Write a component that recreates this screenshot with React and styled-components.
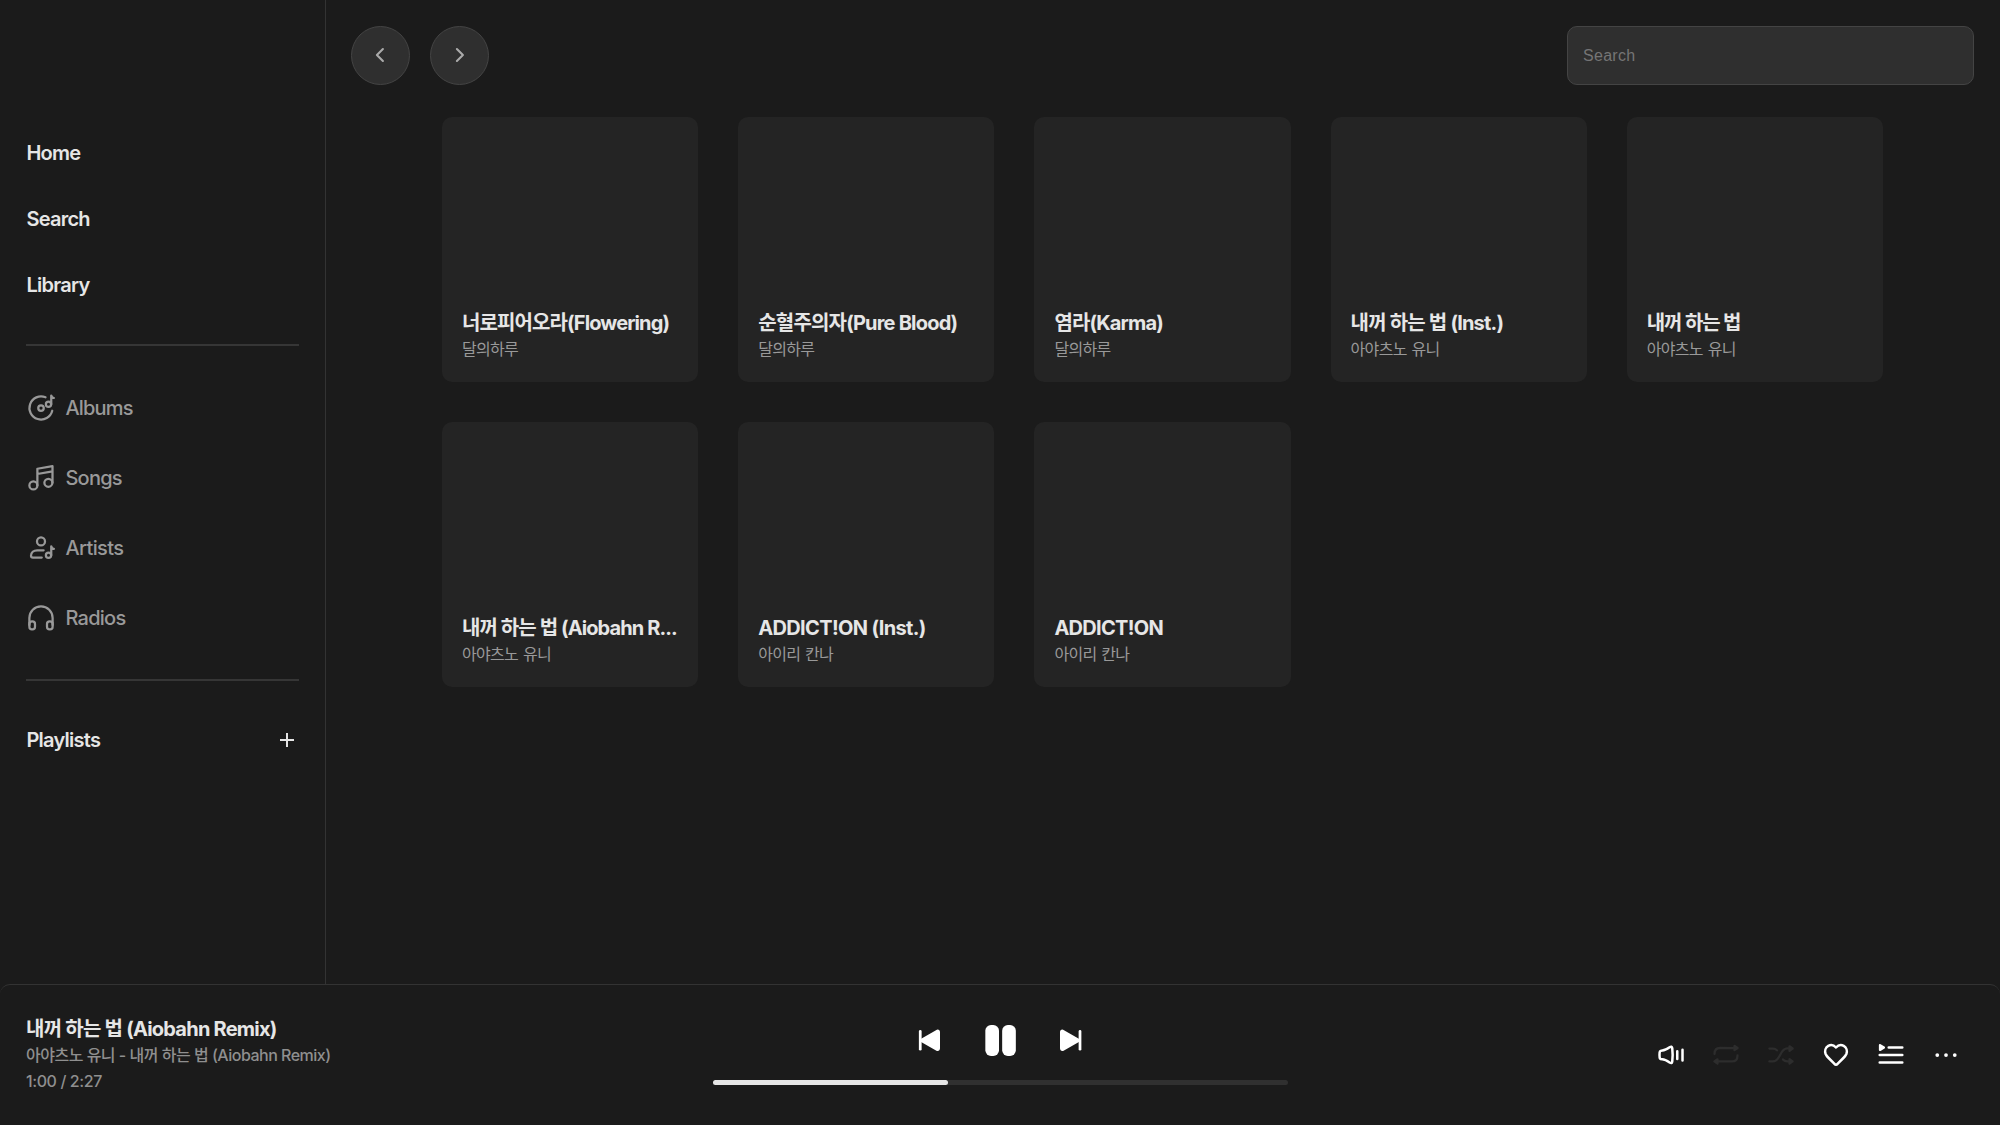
import React from "react";
import styled, { createGlobalStyle } from "styled-components";

const GlobalStyle = createGlobalStyle`
  *, *::before, *::after { box-sizing: border-box; }
  body {
    margin: 0;
    background: #1b1b1b;
    color: #e6e6e6;
    font-family: Inter, "Noto Sans CJK KR", sans-serif;
    overflow: hidden;
  }
`;

const Shell = styled.div`
  display: flex;
  flex-direction: column;
  height: 100vh;
  background: #1b1b1b;
`;

const Body = styled.div`
  display: flex;
  height: 984px;
`;

const Sidebar = styled.nav`
  display: flex;
  flex-direction: column;
  flex: none;
  width: 326px;
  padding: 120px 26px 0;
  border-right: 1px solid #333;
`;

const MainLink = styled.a`
  padding-left: 0.4px;
  font-size: 20px;
  font-weight: 600;
  line-height: 66px;
  letter-spacing: -0.74px;
  color: #e6e6e6;
`;

const Divider = styled.hr`
  width: 273px;
  height: 2px;
  margin: 26px 0 27px;
  border: 0;
  background: #363636;
`;

const SubLink = styled.a`
  display: flex;
  align-items: center;
  gap: 9.4px;
  height: 70px;
  font-size: 20px;
  font-weight: 500;
  letter-spacing: ${(p) => p.$track || -0.74}px;
  color: #999;
`;

const PlaylistHeader = styled.div`
  display: flex;
  align-items: center;
  justify-content: space-between;
  height: 64px;
  padding-right: 5px;
`;

const Content = styled.main`
  flex: 1;
  min-width: 0;
`;

const TopBar = styled.header`
  display: flex;
  align-items: center;
  gap: 20px;
  padding: 26px 26px 0 25px;
`;

const RoundButton = styled.button`
  display: grid;
  place-items: center;
  width: 59px;
  height: 59px;
  padding: 0 1px 1px 0;
  border: 1px solid #444;
  border-radius: 50%;
  background: #2f2f2f;
  color: #aaa;
`;

const SearchInput = styled.input`
  width: 407px;
  height: 59px;
  margin-left: auto;
  padding: 0 15px;
  border: 1px solid #444;
  border-radius: 10px;
  background: #2f2f2f;
  font-family: "Liberation Sans", Arial, sans-serif;
  font-size: 16px;
  letter-spacing: 0.3px;
  &::placeholder { color: #757575; opacity: 1; }
`;

const Grid = styled.section`
  display: grid;
  grid-template-columns: repeat(5, minmax(0, 1fr));
  gap: 40px;
  padding: 32px 117px 0 116px;
`;

const Card = styled.article`
  display: flex;
  flex-direction: column;
  justify-content: flex-end;
  height: 265px;
  padding: 20px 20px 21px;
  border-radius: 10px;
  background: #242424;
`;

const CardTitle = styled.div`
  white-space: nowrap;
  font-size: 20px;
  font-weight: 700;
  line-height: 28px;
  letter-spacing: ${(p) => p.$track || -0.83}px;
`;

const CardArtist = styled.div`
  font-size: 16px;
  line-height: 24px;
  letter-spacing: -0.7px;
  word-spacing: 1px;
  color: #999;
`;

const Player = styled.footer`
  display: grid;
  grid-template-columns: 1fr 575px 1fr;
  height: 141px;
  padding: 0 25px 0 26px;
  border-top: 1px solid #333;
  border-radius: 10px 10px 0 0;
`;

const NowPlaying = styled.div`
  padding-top: 32px;
  white-space: nowrap;
`;

const TrackTitle = styled.div`
  font-size: 20px;
  font-weight: 700;
  line-height: 25px;
  letter-spacing: -0.76px;
`;

const TrackMeta = styled.div`
  font-size: 16px;
  font-weight: 500;
  line-height: 26px;
  letter-spacing: ${(p) => p.$track || -0.5}px;
  color: #8f8f8f;
`;

const Center = styled.div`
  display: flex;
  flex-direction: column;
  align-items: center;
  padding-top: 35px;
`;

const Transport = styled.div`
  display: flex;
  align-items: center;
  gap: 35px;
  height: 40px;
  padding-right: 2px;
  color: #fff;
`;

const Track = styled.div`
  width: 575px;
  height: 5px;
  margin-top: 20px;
  border-radius: 2.5px;
  background: #303030;
`;

const Progress = styled.div`
  height: 5px;
  border-radius: 2.5px;
  background: #e6e6e6;
`;

const Tools = styled.div`
  display: flex;
  justify-content: flex-end;
  gap: 25px;
  padding: 55px 14px 0 0;
  color: #fff;
`;

const Icon = styled.svg.attrs({ viewBox: "0 0 24 24", fill: "none" })`
  display: block;
  flex: none;
  width: ${(p) => p.$size || 30}px;
  height: ${(p) => p.$size || 30}px;
  color: ${(p) => (p.$dim ? "#2d2d2d" : "inherit")};
  stroke: currentColor;
  stroke-width: ${(p) => p.$weight || 1.8};
  stroke-linecap: ${(p) => p.$cap || "round"};
  stroke-linejoin: round;
  .solid { fill: currentColor; }
  .flat { fill: currentColor; stroke: none; }
`;

const AlbumIcon = () => (
  <Icon>
    <path d="M15.6 3.45A9.25 9.25 0 1 0 21 14.2" />
    <circle cx="12" cy="12" r="2.2" />
    <circle cx="18" cy="9" r="2.1" />
    <path d="M20.2 9V2C20.4 3.2 21.2 3.9 22.3 4" />
  </Icon>
);

const SongIcon = () => (
  <Icon>
    <circle cx="5.9" cy="17.9" r="3.2" />
    <circle cx="17.9" cy="15.8" r="3.2" />
    <path d="M9.1 17.9V4.6L21.2 2.5V15.8M9.1 8.8L21.2 6.7" />
  </Icon>
);

const ArtistIcon = () => (
  <Icon>
    <circle cx="12" cy="6.7" r="3.2" />
    <path d="M14.1 13.8H9C6 13.8 4 15.7 4 18.1C4 19.1 4.5 19.6 5.5 19.6H12.6" />
    <circle cx="18" cy="17.7" r="2.1" />
    <path d="M20.2 17.7V10.6C20.4 11.8 21.2 12.6 22.3 12.7" />
  </Icon>
);

const RadioIcon = () => (
  <Icon>
    <path d="M2.7 17.5V12A9.3 9.3 0 0 1 21.3 12V17.5" />
    <rect x="2.7" y="14.6" width="4.5" height="6.5" rx="2.1" />
    <rect x="16.8" y="14.6" width="4.5" height="6.5" rx="2.1" />
  </Icon>
);

const PreviousIcon = () => (
  <Icon>
    <path className="flat" d="M4.9 10.9L16.8 4.1C18.5 3.1 20 4 20 5.8V18.6C20 20.4 18.5 21.3 16.8 20.3L4.9 13.5C3.9 12.9 3.9 11.5 4.9 10.9Z" />
    <rect className="flat" x="3.1" y="4" width="2.2" height="16.4" rx="1.1" />
  </Icon>
);

const NextIcon = () => (
  <Icon>
    <path className="flat" d="M19.1 10.9L7.2 4.1C5.5 3.1 4 4 4 5.8V18.6C4 20.4 5.5 21.3 7.2 20.3L19.1 13.5C20.1 12.9 20.1 11.5 19.1 10.9Z" />
    <rect className="flat" x="18.9" y="4" width="2.2" height="16.4" rx="1.1" />
  </Icon>
);

const PauseIcon = () => (
  <Icon $size={40}>
    <rect className="flat" x="3.2" y="3" width="8.2" height="18.6" rx="3.4" />
    <rect className="flat" x="13.3" y="3" width="8.2" height="18.6" rx="3.4" />
  </Icon>
);

const VolumeIcon = () => (
  <Icon $weight={2}>
    <path d="M2.8 12C2.8 9 3.1 8.5 5 8.4C7.2 8.3 8.9 7.2 10.9 5.8C12.1 5 12.8 5.2 13 6.6C13.4 10 13.4 14 13 17.2C12.8 18.6 12.1 18.8 10.9 18C8.9 16.6 7.2 15.5 5 15.4C3.1 15.3 2.8 15 2.8 12Z" />
    <path d="M17 9V15.2M21.2 7.8V16.4" />
  </Icon>
);

const RepeatIcon = () => (
  <Icon $dim>
    <path d="M2.8 11.2C2.8 8.4 4.3 6.4 7.2 6.4H19.5M21.2 12.3C21.2 15.1 19.7 17.1 16.8 17.1H4.5" />
    <path className="solid" d="M18.8 4.7L21.3 6.4L18.8 8.1ZM5.2 15.4L2.7 17.1L5.2 18.8Z" />
  </Icon>
);

const ShuffleIcon = () => (
  <Icon $dim>
    <path d="M2.7 6.8H5.5C7 6.8 8 7.3 8.8 8.3M2.7 17.1H5.5C11.8 17.1 10.8 6.8 17 6.8H19.5M13.6 15.6C14.4 16.6 15.5 17.1 17 17.1H19.5" />
    <path className="solid" d="M18.8 5L21.3 6.8L18.8 8.6ZM18.8 15.3L21.3 17.1L18.8 18.9Z" />
  </Icon>
);

const HeartIcon = () => (
  <Icon $weight={2}>
    <path d="M12 6C10.3 4.1 7.8 3.6 5.8 4.7C3.6 5.9 2.8 8.7 3.7 11.2C4.2 12.4 5 13.3 5.9 14.2L10.6 18.9C11.6 20.1 12.4 20.1 13.4 18.9L18.1 14.2C19 13.3 19.8 12.4 20.3 11.2C21.2 8.7 20.4 5.9 18.2 4.7C16.2 3.6 13.7 4.1 12 6Z" />
  </Icon>
);

const QueueIcon = () => (
  <Icon $weight={2.1}>
    <path d="M10.2 6H21M3 12H21M3 18H21" />
    <path className="flat" d="M2.3 4C2.3 3.1 2.9 2.9 3.7 3.3L6.8 5.2C7.4 5.6 7.4 6.4 6.8 6.8L3.7 8.7C2.9 9.1 2.3 8.9 2.3 8Z" />
  </Icon>
);

const MoreIcon = () => (
  <Icon>
    <circle className="flat" cx="5" cy="12" r="1.5" />
    <circle className="flat" cx="12" cy="12" r="1.5" />
    <circle className="flat" cx="19" cy="12" r="1.5" />
  </Icon>
);

const mainLinks = ["Home", "Search", "Library"];

const subLinks = [
  { label: "Albums", Glyph: AlbumIcon, track: -0.8 },
  { label: "Songs", Glyph: SongIcon },
  { label: "Artists", Glyph: ArtistIcon, track: -0.6 },
  { label: "Radios", Glyph: RadioIcon },
];

const songs = [
  { title: "너로피어오라(Flowering)", artist: "달의하루", track: -0.88 },
  { title: "순혈주의자(Pure Blood)", artist: "달의하루", track: -0.8 },
  { title: "염라(Karma)", artist: "달의하루" },
  { title: "내꺼 하는 법 (Inst.)", artist: "아야츠노 유니", track: -0.8 },
  { title: "내꺼 하는 법", artist: "아야츠노 유니", track: -1.15 },
  { title: "내꺼 하는 법 (Aiobahn R...", artist: "아야츠노 유니", track: -0.9 },
  { title: "ADDICT!ON (Inst.)", artist: "아이리 칸나", track: -0.64 },
  { title: "ADDICT!ON", artist: "아이리 칸나", track: -0.7 },
];

export default function App() {
  const progress = 60 / 147;
  return (
    <Shell>
      <GlobalStyle />
      <Body>
        <Sidebar>
          {mainLinks.map((label) => (
            <MainLink key={label}>{label}</MainLink>
          ))}
          <Divider />
          {subLinks.map(({ label, Glyph, track }) => (
            <SubLink key={label} $track={track}>
              <Glyph />
              {label}
            </SubLink>
          ))}
          <Divider />
          <PlaylistHeader>
            <MainLink>Playlists</MainLink>
            <Icon $size={14} $weight={3.4} $cap="butt">
              <path d="M12 0V24M0 12H24" />
            </Icon>
          </PlaylistHeader>
        </Sidebar>
        <Content>
          <TopBar>
            <RoundButton aria-label="Back">
              <Icon $size={24} $weight={2.1}>
                <path d="M14.9 6L8.9 12L14.9 18" />
              </Icon>
            </RoundButton>
            <RoundButton aria-label="Forward">
              <Icon $size={24} $weight={2.1}>
                <path d="M9.9 6L15.9 12L9.9 18" />
              </Icon>
            </RoundButton>
            <SearchInput placeholder="Search" />
          </TopBar>
          <Grid>
            {songs.map((song) => (
              <Card key={song.title}>
                <CardTitle $track={song.track}>{song.title}</CardTitle>
                <CardArtist>{song.artist}</CardArtist>
              </Card>
            ))}
          </Grid>
        </Content>
      </Body>
      <Player>
        <NowPlaying>
          <TrackTitle>내꺼 하는 법 (Aiobahn Remix)</TrackTitle>
          <TrackMeta>아야츠노 유니 - 내꺼 하는 법 (Aiobahn Remix)</TrackMeta>
          <TrackMeta $track={-0.4}>1:00 / 2:27</TrackMeta>
        </NowPlaying>
        <Center>
          <Transport>
            <PreviousIcon />
            <PauseIcon />
            <NextIcon />
          </Transport>
          <Track>
            <Progress style={{ width: `${progress * 100}%` }} />
          </Track>
        </Center>
        <Tools>
          <VolumeIcon />
          <RepeatIcon />
          <ShuffleIcon />
          <HeartIcon />
          <QueueIcon />
          <MoreIcon />
        </Tools>
      </Player>
    </Shell>
  );
}
